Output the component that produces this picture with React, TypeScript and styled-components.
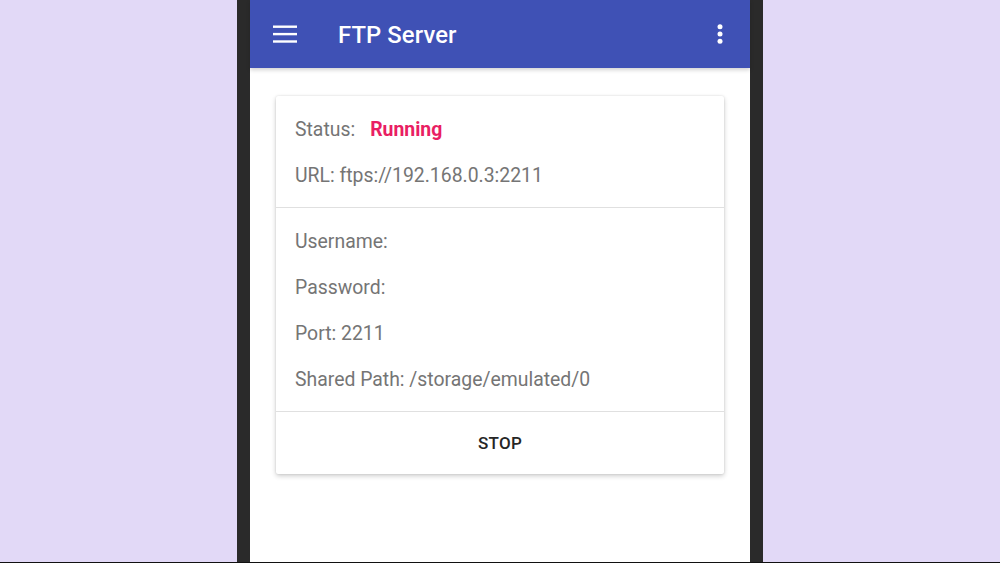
import React from "react";
import styled, { createGlobalStyle } from "styled-components";

const GlobalStyle = createGlobalStyle`
  html, body {
    margin: 0;
    padding: 0;
    background: #e2d9f7;
  }
  body {
    font-family: Roboto, "Noto Sans", "Liberation Sans", sans-serif;
  }
`;

// Lavender backdrop with the device centred in it
const Stage = styled.div`
  height: 562px;
  display: flex;
  justify-content: center;
  background: #e2d9f7;
  border-bottom: 1px solid #111;
`;

const PhoneFrame = styled.div`
  width: 500px;
  padding: 0 13px;
  background: #2a2a2a;
  display: flex;
`;

const Screen = styled.div`
  flex: 1;
  background: #ffffff;
  display: flex;
  flex-direction: column;
`;

const AppBar = styled.header`
  height: 68px;
  flex-shrink: 0;
  background: #3f51b5;
  display: flex;
  align-items: center;
  padding: 0 14px 0 19px;
  box-shadow: 0 2px 4px rgba(0, 0, 0, 0.18);
  position: relative;
  z-index: 1;
`;

const IconButton = styled.div`
  width: 32px;
  height: 32px;
  display: flex;
  align-items: center;
  justify-content: center;
  color: #ffffff;
`;

const Title = styled.h1`
  flex: 1;
  margin: 2px 0 0 37px;
  font-size: 23.8px;
  font-weight: 500;
  color: #ffffff;
  letter-spacing: 0.1px;
`;

const Content = styled.main`
  flex: 1;
  padding: 28px 26px 0;
`;

const Card = styled.section`
  background: #ffffff;
  border-radius: 2px;
  box-shadow: 0 2px 5px rgba(0, 0, 0, 0.2), 0 0 2px rgba(0, 0, 0, 0.12);
  display: flex;
  flex-direction: column;
`;

const Section = styled.div`
  padding: 10px 19px 9px;
  border-bottom: 1px solid #e0e0e0;
`;

const Row = styled.div`
  height: 46px;
  display: flex;
  align-items: center;
  font-size: 19.4px;
  color: #757575;
`;

const Status = styled.span<{ $color: string }>`
  margin-left: 15px;
  font-weight: 700;
  color: ${(p) => p.$color};
`;

const ActionButton = styled.button`
  height: 62px;
  border: none;
  background: transparent;
  font-family: inherit;
  font-size: 17px;
  font-weight: 500;
  color: #262626;
  letter-spacing: 0.3px;
  cursor: pointer;
`;

const MenuIcon = () => (
  <svg width="26" height="24" viewBox="0 0 26 24">
    <rect x="1" y="3.5" width="24" height="2.4" fill="currentColor" />
    <rect x="1" y="10.9" width="24" height="2.4" fill="currentColor" />
    <rect x="1" y="18.3" width="24" height="2.4" fill="currentColor" />
  </svg>
);

const MoreIcon = () => (
  <svg width="8" height="24" viewBox="0 0 8 24">
    <circle cx="4" cy="4.7" r="2.5" fill="currentColor" />
    <circle cx="4" cy="12" r="2.5" fill="currentColor" />
    <circle cx="4" cy="19.3" r="2.5" fill="currentColor" />
  </svg>
);

const info = [
  "Username:",
  "Password:",
  "Port: 2211",
  "Shared Path: /storage/emulated/0",
];

export default function App() {
  return (
    <>
      <GlobalStyle />
      <Stage>
        <PhoneFrame>
          <Screen>
            <AppBar>
              <IconButton>
                <MenuIcon />
              </IconButton>
              <Title>FTP Server</Title>
              <IconButton>
                <MoreIcon />
              </IconButton>
            </AppBar>
            <Content>
              <Card>
                <Section>
                  <Row>
                    Status:<Status $color="#e91e63">Running</Status>
                  </Row>
                  <Row>URL: ftps://192.168.0.3:2211</Row>
                </Section>
                <Section>
                  {info.map((line) => (
                    <Row key={line}>{line}</Row>
                  ))}
                </Section>
                <ActionButton>STOP</ActionButton>
              </Card>
            </Content>
          </Screen>
        </PhoneFrame>
      </Stage>
    </>
  );
}
